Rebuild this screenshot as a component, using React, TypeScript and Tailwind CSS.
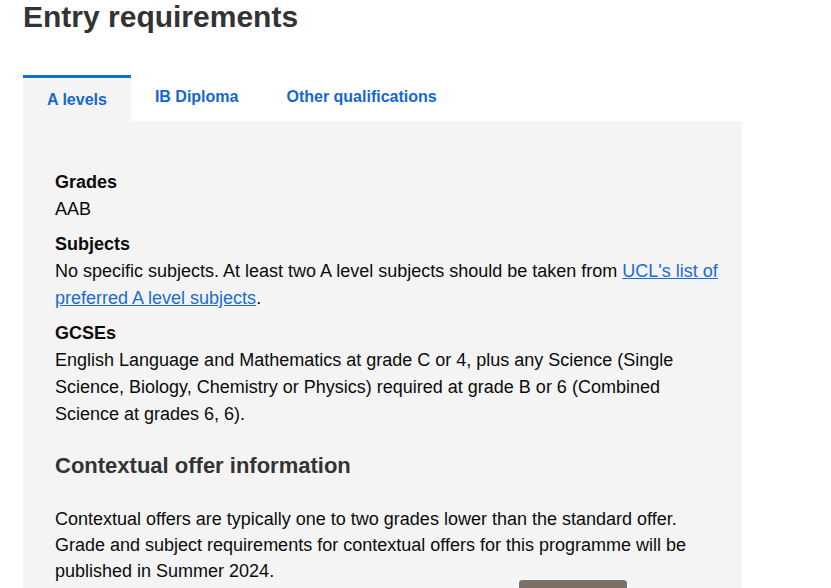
export default function App() {
  const font = { fontFamily: '"Liberation Sans", Arial, sans-serif' };
  return (
    <div className="relative h-[588px] overflow-hidden bg-white pl-[23px]" style={font}>
      <h1 className="m-0 text-[30px] font-bold leading-[34px] text-[#333333]">Entry requirements</h1>
      <div className="mt-[41px] w-[719px]">
        <div className="flex h-[46px] items-start">
          <div className="border-t-[3px] border-[#0b6fd9] bg-[#f4f4f4] px-[24px] py-[12px] text-[16px] font-bold leading-[19px] text-[#1467d3]">
            A levels
          </div>
          <div className="px-[24px] py-[12px] text-[16px] font-bold leading-[19px] text-[#1467d3]">IB Diploma</div>
          <div className="px-[24px] py-[12px] text-[16px] font-bold leading-[19px] text-[#1467d3]">
            Other qualifications
          </div>
        </div>
        <div className="bg-[#f4f4f4] pl-[32px] pr-[20px] pt-[48px] pb-[40px] text-[18px] leading-[27px] text-[#0b0b0b]">
          <div className="font-bold">Grades</div>
          <div>AAB</div>
          <div className="mt-[8px] font-bold">Subjects</div>
          <div>
            No specific subjects. At least two A level subjects should be taken from{' '}
            <a className="text-[#1a6bd6] underline">UCL's list of preferred A level subjects</a>.
          </div>
          <div className="mt-[8px] font-bold">GCSEs</div>
          <div>
            English Language and Mathematics at grade C or 4, plus any Science (Single Science, Biology, Chemistry or
            Physics) required at grade B or 6 (Combined Science at grades 6, 6).
          </div>
          <h2 className="mt-[23px] text-[22px] font-bold leading-[29px] text-[#333333]">Contextual offer information</h2>
          <p className="mt-[26px] leading-[26px]">
            Contextual offers are typically one to two grades lower than the standard offer. Grade and subject
            requirements for contextual offers for this programme will be published in Summer 2024.
          </p>
        </div>
      </div>
      <div className="absolute left-[518px] top-[579px] rounded-[4px] border border-white bg-[#7b7168] px-[6px] py-[5px] text-[14px] leading-[18px] text-white">
        Cookie settings
      </div>
    </div>
  );
}
